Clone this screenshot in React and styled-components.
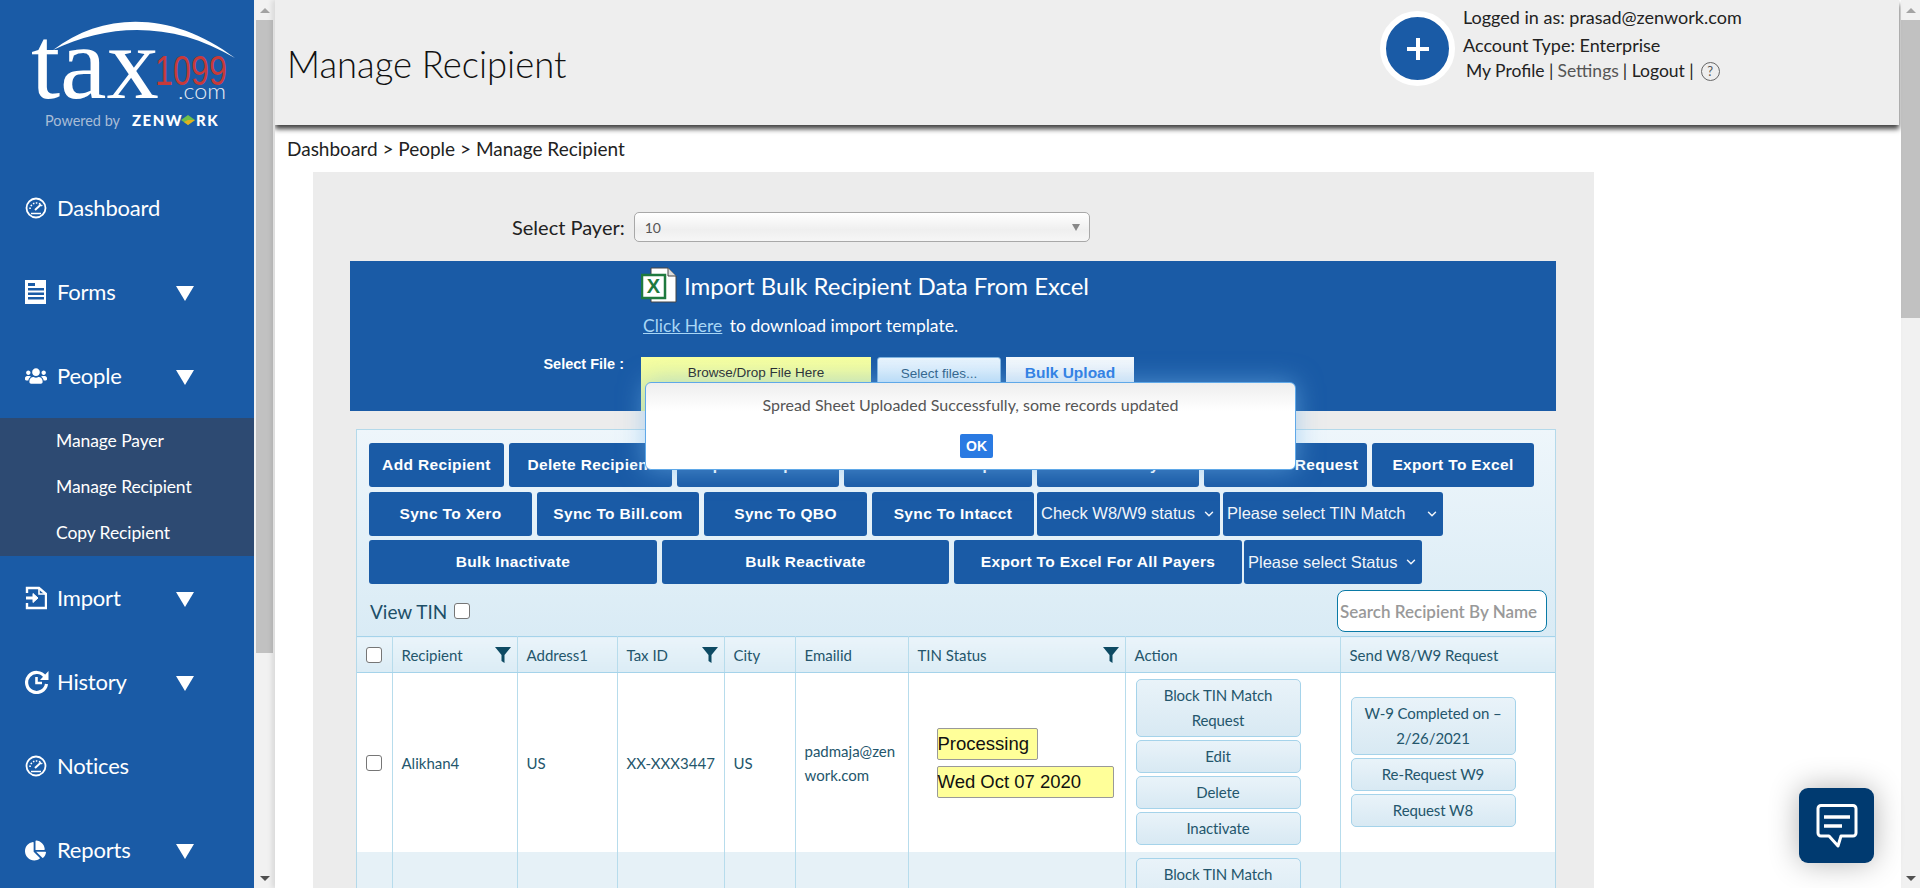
import React from 'react';
import styled, { createGlobalStyle } from 'styled-components';
import { ChevronDown } from 'lucide-react';
import { FaUsers, FaChartPie } from 'react-icons/fa';

const GlobalStyle = createGlobalStyle`
  html, body {
    margin: 0;
    padding: 0;
    height: 100%;
    overflow: hidden;
    background: #fff;
    font-family: Lato, "Liberation Sans", sans-serif;
  }
  * { box-sizing: border-box; }
`;

const Page = styled.div`
  position: relative;
  display: flex;
  width: 1920px;
  height: 888px;
  overflow: hidden;
`;

const Sidebar = styled.aside`
  flex: 0 0 254px;
  background: #1a5ba6;
  color: #fff;
  overflow: hidden;
`;

const LogoBox = styled.div`
  height: 166px;
`;

const Nav = styled.nav`
  display: flex;
  flex-direction: column;
`;

const NavItem = styled.div`
  flex: none;
  height: 84px;
  display: flex;
  align-items: center;
  padding: 0 0 2px 25px;
  font-size: 22px;
  color: #fff;
  letter-spacing: -0.2px;
`;

const NavIcon = styled.span`
  width: 32px;
  margin-top: 2px;
  display: flex;
  align-items: center;
`;

const NavLabel = styled.span`
  width: 119px;
`;

const Caret = styled.span`
  width: 0;
  height: 0;
  margin-top: 4px;
  border-left: 9.5px solid transparent;
  border-right: 9.5px solid transparent;
  border-top: 15px solid #fff;
`;

const SubMenu = styled.div`
  flex: none;
  background: #2d4a72;
  height: 138px;
  display: flex;
  flex-direction: column;
`;

const SubItem = styled.div`
  height: 46px;
  display: flex;
  align-items: center;
  padding: 0 0 2px 56px;
  font-size: 17.5px;
  letter-spacing: -0.1px;
  color: #fff;
`;

const ScrollBar = styled.div`
  flex: 0 0 ${(p) => p.$w}px;
  padding: 0 ${(p) => p.$pad}px;
  background: #f1f1f1;
  display: flex;
  flex-direction: column;
  align-items: stretch;
`;

const ScrollArrow = styled.div`
  height: 20px;
  display: flex;
  align-items: center;
  justify-content: center;
  &::before {
    content: '';
    width: 0;
    height: 0;
    border-left: 5px solid transparent;
    border-right: 5px solid transparent;
    ${(p) => (p.$up ? 'border-bottom: 5px solid #a3a3a3;' : 'border-top: 5px solid #505050;')}
  }
`;

const ScrollThumb = styled.div`
  height: ${(p) => p.$h}px;
  background: #c1c1c1;
`;

const ScrollRest = styled.div`
  flex: 1;
`;

const Main = styled.main`
  flex: 1;
  min-width: 0;
  display: flex;
  flex-direction: column;
  overflow: hidden;
  box-shadow: -3px 0 5px rgba(0, 0, 0, 0.1);
  z-index: 1;
  background: #fff;
`;

const Header = styled.header`
  height: 125px;
  flex: none;
  background: #eee;
  box-shadow: 0 4px 5px rgba(0, 0, 0, 0.75);
  display: flex;
  justify-content: space-between;
  padding-left: 12px;
  margin-right: 2px;
  position: relative;
`;

const Title = styled.h1`
  margin: 0;
  font-weight: 300;
  font-size: 36.4px;
  line-height: 128px;
  color: #111;
`;

const UserBox = styled.div`
  display: flex;
  width: 519px;
  padding-top: 11px;
`;

const AddCircle = styled.div`
  width: 75px;
  height: 75px;
  border-radius: 50%;
  background: #1a5ba6;
  border: 6px solid #fff;
  display: flex;
  align-items: center;
  justify-content: center;
  color: #fff;
  flex: none;
`;

const UserText = styled.div`
  margin: -8px 0 0 8px;
  font-size: 18px;
  color: #222;
  line-height: 28px;
`;

const LinkRow = styled.div`
  display: flex;
  align-items: center;
  gap: 4px;
  padding-left: 3px;
  font-size: 17.5px;
  line-height: 24px;
`;

const Muted = styled.span`
  color: #555;
`;

const Help = styled.span`
  width: 19px;
  height: 19px;
  border-radius: 50%;
  border: 1px solid #666;
  font-size: 13px;
  line-height: 17px;
  text-align: center;
  color: #555;
  margin-left: 3px;
`;

const Breadcrumb = styled.div`
  flex: none;
  height: 47px;
  padding: 12px 0 0 12px;
  font-size: 19px;
  line-height: 24px;
  color: #222;
`;

const Panel = styled.section`
  margin-left: 38px;
  width: 1281px;
  flex: 1 0 auto;
  background: #ececec;
  padding-top: 40px;
`;

const PayerRow = styled.div`
  display: flex;
  align-items: center;
  height: 30px;
  margin-left: 199px;
  font-size: 20px;
  color: #222;
`;

const PayerSelect = styled.div`
  width: 456px;
  height: 30px;
  margin-left: 9px;
  border: 1px solid #a8a8a8;
  border-radius: 5px;
  background: linear-gradient(#fff, #efefef 60%, #f6f6f6);
  display: flex;
  align-items: center;
  justify-content: space-between;
  padding: 0 9px 0 10px;
  font-size: 14px;
  color: #555;
`;

const PayerArrow = styled.span`
  width: 0;
  height: 0;
  border-left: 4px solid transparent;
  border-right: 4px solid transparent;
  border-top: 7px solid #888;
`;

const ImportBox = styled.div`
  margin: 19px 0 0 37px;
  width: 1206px;
  height: 150px;
  background: #1a5ba6;
  color: #fff;
  padding: 6px 0 0 291px;
  position: relative;
`;

const ImportTitle = styled.div`
  display: flex;
  align-items: center;
  gap: 7px;
  height: 36px;
  font-size: 24px;
`;

const ImportHint = styled.div`
  margin: 11px 0 0 2px;
  font-size: 17.5px;
  line-height: 24px;
`;

const TemplateLink = styled.a`
  color: #a8d6f5;
  text-decoration: underline;
  margin-right: 3px;
`;

const FileLabel = styled.span`
  position: absolute;
  left: 0;
  top: 95px;
  width: 274px;
  text-align: right;
  font: bold 14.5px "Liberation Sans", sans-serif;
`;

const FileRow = styled.div`
  display: flex;
  margin-top: 19px;
`;

const DropBox = styled.div`
  width: 230px;
  height: 54px;
  background: linear-gradient(#f7ffa0, #e4f49c);
  color: #222;
  text-align: center;
  font: 13.5px/31px "Liberation Sans", sans-serif;
`;

const SelectFiles = styled.div`
  width: 124px;
  height: 54px;
  margin-left: 6px;
  border: 1px solid #7fb4e0;
  border-radius: 3px 3px 0 0;
  background: linear-gradient(#e9f4fd, #b9dcf7);
  color: #2a5a80;
  text-align: center;
  font: 13.5px/31px "Liberation Sans", sans-serif;
`;

const BulkUpload = styled.div`
  width: 128px;
  height: 54px;
  margin-left: 5px;
  background: linear-gradient(#f4f8fc, #dbe9f6);
  color: #2a7ae2;
  text-align: center;
  font: bold 15.5px/31px "Liberation Sans", sans-serif;
`;

const Toolbar = styled.div`
  margin: 18px 0 0 43px;
  width: 1200px;
  border: 1px solid #b4d9ea;
  background: linear-gradient(#eef6fb, #d9ebf5 208px);
  padding-top: 13px;
`;

const ButtonRows = styled.div`
  display: flex;
  flex-direction: column;
  gap: 4.5px;
  padding-left: 12px;
`;

const ButtonRow = styled.div`
  display: flex;
  gap: 5px;
`;

const ActionButton = styled.div`
  width: ${(p) => p.$w}px;
  height: 44px;
  background: #1a5ba6;
  border-radius: 3px;
  color: #fff;
  font: bold 15.5px "Liberation Sans", sans-serif;
  letter-spacing: 0.35px;
  display: flex;
  align-items: center;
  justify-content: center;
`;

const DropButton = styled.div`
  width: ${(p) => p.$w}px;
  margin-left: ${(p) => p.$ml}px;
  height: 44px;
  background: #1a5ba6;
  border-radius: 3px;
  color: #f1f5fa;
  font: 16.5px "Liberation Sans", sans-serif;
  display: flex;
  align-items: center;
  justify-content: space-between;
  padding: 0 4px;
`;

const TinRow = styled.div`
  height: 52px;
  display: flex;
  align-items: center;
  justify-content: space-between;
  padding: 2px 8px 0 13px;
`;

const TinLabel = styled.label`
  display: flex;
  align-items: center;
  gap: 7px;
  font-size: 19px;
  color: #1d4f68;
`;

const Check = styled.input.attrs({ type: 'checkbox' })`
  appearance: none;
  margin: 0;
  width: 16px;
  height: 16px;
  border: 1px solid #767676;
  border-radius: 3px;
  background: #fff;
  display: block;
`;

const Search = styled.input`
  width: 210px;
  height: 42px;
  border: 1px solid #0a7aa6;
  border-radius: 8px;
  background: #fff;
  padding: 0 2px;
  font: 600 17px Lato, sans-serif;
  outline: none;
  &::placeholder { color: #999; opacity: 1; }
`;

const Table = styled.table`
  width: 1198px;
  table-layout: fixed;
  border-collapse: collapse;
  background: #fff;
  color: #24566c;
  font-size: 15px;
`;

const Th = styled.th`
  height: 36px;
  padding: 0 6px 0 9px;
  font-weight: 400;
  text-align: left;
  background: linear-gradient(#eaf4fa, #dbecf5);
  border-top: 1px solid #a5d3ea;
  border-bottom: 1px solid #a5d3ea;
  border-right: 1px solid #b7dcec;
  &:last-child { border-right: 0; }
  &:first-child { padding: 0 9px; }
`;

const HeadCell = styled.div`
  display: flex;
  align-items: center;
  justify-content: space-between;
`;

const Tr = styled.tr`
  height: 179px;
  background: ${(p) => (p.$alt ? '#e6f1f7' : '#fff')};
`;

const Td = styled.td`
  padding: 0 10px 0 9px;
  line-height: 24px;
  border-right: 1px solid #b7dcec;
  white-space: ${(p) => (p.$wrap ? 'normal' : 'nowrap')};
  word-break: ${(p) => (p.$wrap ? 'break-all' : 'normal')};
  &:last-child { border-right: 0; }
  &:first-child { padding: 0 9px; }
`;

const ButtonCell = styled(Td)`
  padding: 6px 10px 4px;
  white-space: normal;
  vertical-align: ${(p) => (p.$top ? 'top' : 'middle')};
`;

const StatusTag = styled.div`
  width: ${(p) => p.$w}px;
  height: 32px;
  margin: ${(p) => p.$m};
  background: #ffff99;
  border: 1px solid #999;
  border-radius: 2px;
  color: #111;
  font: 18.5px/30px "Liberation Sans", sans-serif;
`;

const RowButton = styled.div`
  width: 165px;
  padding: 3px 6px;
  margin-bottom: 3px;
  text-align: center;
  line-height: 25px;
  font-size: 15px;
  letter-spacing: -0.1px;
  color: #24566c;
  background: linear-gradient(#e9f3f9, #d8e9f3);
  border: 1px solid #a5d3ea;
  border-radius: 5px;
`;

const ModalBox = styled.div`
  position: absolute;
  left: 645px;
  top: 382px;
  width: 651px;
  height: 88px;
  background: linear-gradient(#eeeeee, #fff 28px);
  border: 1px solid #5fa8e8;
  border-radius: 6px;
  box-shadow: 0 0 26px rgba(120, 185, 240, 0.55);
  text-align: center;
  color: #555;
  font-size: 16px;
  z-index: 5;
  padding-top: 12px;
  line-height: 20px;
`;

const OkButton = styled.div`
  width: 33px;
  height: 24px;
  margin: 19px 0 0 314px;
  background: #2a7ae2;
  border-radius: 2px;
  color: #fff;
  font: bold 14px/24px "Liberation Sans", sans-serif;
`;

const ChatButton = styled.div`
  position: absolute;
  left: 1799px;
  top: 788px;
  width: 75px;
  height: 75px;
  background: #003a70;
  border-radius: 9px;
  box-shadow: 0 0 30px rgba(0, 0, 0, 0.3);
  display: flex;
  align-items: center;
  justify-content: center;
  z-index: 6;
`;

const Logo = () => (
  <svg width="254" height="140" viewBox="0 0 254 140">
    <path d="M53 50 C105 10 175 12 235 58 C175 22 110 22 53 50 Z" fill="#fff" />
    <text x="31" y="98" fontFamily="Liberation Serif" fontSize="104" fill="#fff" textLength="128" lengthAdjust="spacingAndGlyphs">tax</text>
    <text x="155" y="85" fontFamily="Liberation Sans" fontSize="42" fill="#c63a3a" textLength="72" lengthAdjust="spacingAndGlyphs">1099</text>
    <text x="178" y="99" fontFamily="Lato" fontWeight="300" fontSize="22" fill="#e6ecf4" textLength="48" lengthAdjust="spacingAndGlyphs">.com</text>
    <text x="45" y="126" fontFamily="Lato" fontSize="14.5" fill="#a9bdd6" textLength="75" lengthAdjust="spacingAndGlyphs">Powered by</text>
    <text x="132" y="126" fontFamily="Lato" fontWeight="900" fontSize="15" fill="#fff" letterSpacing="1.5">ZENW</text>
    <path d="M188 115 L195 120 L188 125 L181 120 Z" fill="#6fbf4a" />
    <path d="M188 120 L195 120 L188 125 L184 122 Z" fill="#e0b020" />
    <text x="196" y="126" fontFamily="Lato" fontWeight="900" fontSize="15" fill="#fff" letterSpacing="1.5">RK</text>
  </svg>
);

const GaugeIcon = () => (
  <svg width="22" height="22" viewBox="0 0 22 22" fill="none" stroke="#fff">
    <circle cx="11" cy="11" r="9.5" strokeWidth="1.8" />
    <path d="M5 12 A6.5 6.5 0 0 1 17 9" strokeWidth="1.6" strokeDasharray="1.5 1.5" />
    <path d="M10 13 L16 7.5" strokeWidth="2" />
    <path d="M6 16.5 H16" strokeWidth="1.5" />
  </svg>
);

const FormsIcon = () => (
  <svg width="22" height="25" viewBox="0 0 22 25" fill="#fff">
    <path d="M0 0 H21 V24 H0 Z M3 3 V6 H10 V3 Z M3 8 V10.5 H19 V8 Z M3 12.5 V15 H19 V12.5 Z M3 17 V19.5 H19 V17 Z" fillRule="evenodd" />
  </svg>
);

const ImportIcon = () => (
  <svg width="22" height="24" viewBox="0 0 22 24" fill="none" stroke="#fff" strokeWidth="2.4">
    <path d="M2 7 V2 H14 L21 8 V22 H2 V17" />
    <path d="M14 2 V8 H21" strokeWidth="1.6" />
    <path d="M1 12 H10" strokeWidth="3" />
    <path d="M8 7.5 L13 12 L8 16.5 Z" fill="#fff" strokeWidth="1" />
  </svg>
);

const HistoryIcon = () => (
  <svg width="24" height="24" viewBox="0 0 24 24" fill="none" stroke="#fff">
    <path d="M20 7 A10 10 0 1 0 21.5 14" strokeWidth="3.2" />
    <path d="M23.5 1 V10 H15 Z" fill="#fff" stroke="none" />
    <path d="M11.5 7 V13 H17" strokeWidth="2.6" />
  </svg>
);

const FunnelIcon = () => (
  <svg width="16" height="16" viewBox="0 0 16 16" fill="#0d4a63">
    <path d="M0 0 H16 L9.5 8 V16 L6.5 14 V8 Z" />
  </svg>
);

const ExcelIcon = () => (
  <svg width="36" height="36" viewBox="0 0 36 36">
    <path d="M10 1 H27 L35 9 V35 H10 Z" fill="#fff" stroke="#444" />
    <path d="M27 1 V9 H35" fill="#ddd" stroke="#444" />
    <rect x="1" y="8" width="23" height="23" fill="#fff" stroke="#1f7a3f" strokeWidth="2.5" />
    <text x="12.5" y="26" textAnchor="middle" fontFamily="Liberation Sans" fontWeight="700" fontSize="20" fill="#1f7a3f">X</text>
  </svg>
);

const ChatIcon = () => (
  <svg width="42" height="44" viewBox="0 0 42 44" fill="none" stroke="#fff">
    <path d="M5 1.5 H37 A3 3 0 0 1 40 4.5 V29 A3 3 0 0 1 37 32 H25 L22 42 L13 32 H5 A3 3 0 0 1 2 29 V4.5 A3 3 0 0 1 5 1.5 Z" strokeWidth="3" strokeLinejoin="round" />
    <path d="M8 13 H34" strokeWidth="3.5" />
    <path d="M8 22 H26" strokeWidth="3.5" />
  </svg>
);

const navBefore = [
  { label: 'Dashboard', icon: <GaugeIcon /> },
  { label: 'Forms', icon: <FormsIcon />, caret: true },
  { label: 'People', icon: <FaUsers size={22} />, caret: true },
];

const navAfter = [
  { label: 'Import', icon: <ImportIcon />, caret: true },
  { label: 'History', icon: <HistoryIcon />, caret: true },
  { label: 'Notices', icon: <GaugeIcon /> },
  { label: 'Reports', icon: <FaChartPie size={21} />, caret: true },
];

const renderNav = (item) => (
  <NavItem key={item.label}>
    <NavIcon>{item.icon}</NavIcon>
    <NavLabel>{item.label}</NavLabel>
    {item.caret && <Caret />}
  </NavItem>
);

const columns = [
  { label: 'Recipient', filter: true },
  { label: 'Address1' },
  { label: 'Tax ID', filter: true },
  { label: 'City' },
  { label: 'Emailid' },
  { label: 'TIN Status', filter: true },
  { label: 'Action' },
  { label: 'Send W8/W9 Request' },
];

const widths = [35, 125, 100, 107, 71, 113, 217, 215, 215];

const App = () => (
  <Page>
    <GlobalStyle />
    <Sidebar>
      <LogoBox>
        <Logo />
      </LogoBox>
      <Nav>
        {navBefore.map(renderNav)}
        <SubMenu>
          <SubItem>Manage Payer</SubItem>
          <SubItem>Manage Recipient</SubItem>
          <SubItem>Copy Recipient</SubItem>
        </SubMenu>
        {navAfter.map(renderNav)}
      </Nav>
    </Sidebar>
    <ScrollBar $w={21} $pad={2}>
      <ScrollArrow $up />
      <ScrollThumb $h={633} />
      <ScrollRest />
      <ScrollArrow />
    </ScrollBar>
    <Main>
      <Header>
        <Title>Manage Recipient</Title>
        <UserBox>
          <AddCircle>
            <svg width="24" height="24" viewBox="0 0 24 24" stroke="#fff" strokeWidth="4">
              <path d="M12 1 V23 M1 12 H23" />
            </svg>
          </AddCircle>
          <UserText>
            <div>Logged in as: prasad@zenwork.com</div>
            <div>Account Type: Enterprise</div>
            <LinkRow>
              My Profile | <Muted>Settings</Muted> | Logout | <Help>?</Help>
            </LinkRow>
          </UserText>
        </UserBox>
      </Header>
      <Breadcrumb>Dashboard &gt; People &gt; Manage Recipient</Breadcrumb>
      <Panel>
        <PayerRow>
          Select Payer:
          <PayerSelect>
            10
            <PayerArrow />
          </PayerSelect>
        </PayerRow>
        <ImportBox>
          <ImportTitle>
            <ExcelIcon />
            Import Bulk Recipient Data From Excel
          </ImportTitle>
          <ImportHint>
            <TemplateLink>Click Here</TemplateLink> to download import template.
          </ImportHint>
          <FileLabel>Select File :</FileLabel>
          <FileRow>
            <DropBox>Browse/Drop File Here</DropBox>
            <SelectFiles>Select files...</SelectFiles>
            <BulkUpload>Bulk Upload</BulkUpload>
          </FileRow>
        </ImportBox>
        <Toolbar>
          <ButtonRows>
            <ButtonRow>
              <ActionButton $w={135}>Add Recipient</ActionButton>
              <ActionButton $w={163}>Delete Recipient</ActionButton>
              <ActionButton $w={162}>Import Recipient</ActionButton>
              <ActionButton $w={188}>Send W8/W9 Request</ActionButton>
              <ActionButton $w={162}>Move To Payer</ActionButton>
              <ActionButton $w={163}>TIN Match Request</ActionButton>
              <ActionButton $w={162}>Export To Excel</ActionButton>
            </ButtonRow>
            <ButtonRow>
              <ActionButton $w={163}>Sync To Xero</ActionButton>
              <ActionButton $w={162}>Sync To Bill.com</ActionButton>
              <ActionButton $w={163}>Sync To QBO</ActionButton>
              <ActionButton $w={162}>Sync To Intacct</ActionButton>
              <DropButton $w={183} $ml={-2}>
                Check W8/W9 status
                <ChevronDown size={14} strokeWidth={2.5} />
              </DropButton>
              <DropButton $w={220} $ml={-2}>
                Please select TIN Match
                <ChevronDown size={14} strokeWidth={2.5} />
              </DropButton>
            </ButtonRow>
            <ButtonRow>
              <ActionButton $w={288}>Bulk Inactivate</ActionButton>
              <ActionButton $w={287}>Bulk Reactivate</ActionButton>
              <ActionButton $w={288}>Export To Excel For All Payers</ActionButton>
              <DropButton $w={178} $ml={-3}>
                Please select Status
                <ChevronDown size={14} strokeWidth={2.5} />
              </DropButton>
            </ButtonRow>
          </ButtonRows>
          <TinRow>
            <TinLabel>
              View TIN
              <Check />
            </TinLabel>
            <Search placeholder="Search Recipient By Name" />
          </TinRow>
          <Table>
            <colgroup>
              {widths.map((w, i) => (
                <col key={i} style={{ width: w }} />
              ))}
            </colgroup>
            <thead>
              <tr>
                <Th>
                  <Check />
                </Th>
                {columns.map((c) => (
                  <Th key={c.label}>
                    <HeadCell>
                      {c.label}
                      {c.filter && <FunnelIcon />}
                    </HeadCell>
                  </Th>
                ))}
              </tr>
            </thead>
            <tbody>
              <Tr>
                <Td>
                  <Check />
                </Td>
                <Td>Alikhan4</Td>
                <Td>US</Td>
                <Td>XX-XXX3447</Td>
                <Td>US</Td>
                <Td $wrap>padmaja@zenwork.com</Td>
                <Td>
                  <StatusTag $w={101} $m="0 0 6px 19px">Processing</StatusTag>
                  <StatusTag $w={177} $m="0 0 0 19px">Wed Oct 07 2020</StatusTag>
                </Td>
                <ButtonCell>
                  <RowButton>Block TIN Match Request</RowButton>
                  <RowButton>Edit</RowButton>
                  <RowButton>Delete</RowButton>
                  <RowButton>Inactivate</RowButton>
                </ButtonCell>
                <ButtonCell>
                  <RowButton>W-9 Completed on – 2/26/2021</RowButton>
                  <RowButton>Re-Request W9</RowButton>
                  <RowButton>Request W8</RowButton>
                </ButtonCell>
              </Tr>
              <Tr $alt>
                <Td />
                <Td />
                <Td />
                <Td />
                <Td />
                <Td />
                <Td />
                <ButtonCell $top>
                  <RowButton>Block TIN Match Request</RowButton>
                </ButtonCell>
                <Td />
              </Tr>
            </tbody>
          </Table>
        </Toolbar>
      </Panel>
    </Main>
    <ScrollBar $w={19} $pad={0}>
      <ScrollArrow $up />
      <ScrollThumb $h={298} />
      <ScrollRest />
      <ScrollArrow />
    </ScrollBar>
    <ModalBox>
      Spread Sheet Uploaded Successfully, some records updated
      <OkButton>OK</OkButton>
    </ModalBox>
    <ChatButton>
      <ChatIcon />
    </ChatButton>
  </Page>
);

export default App;
